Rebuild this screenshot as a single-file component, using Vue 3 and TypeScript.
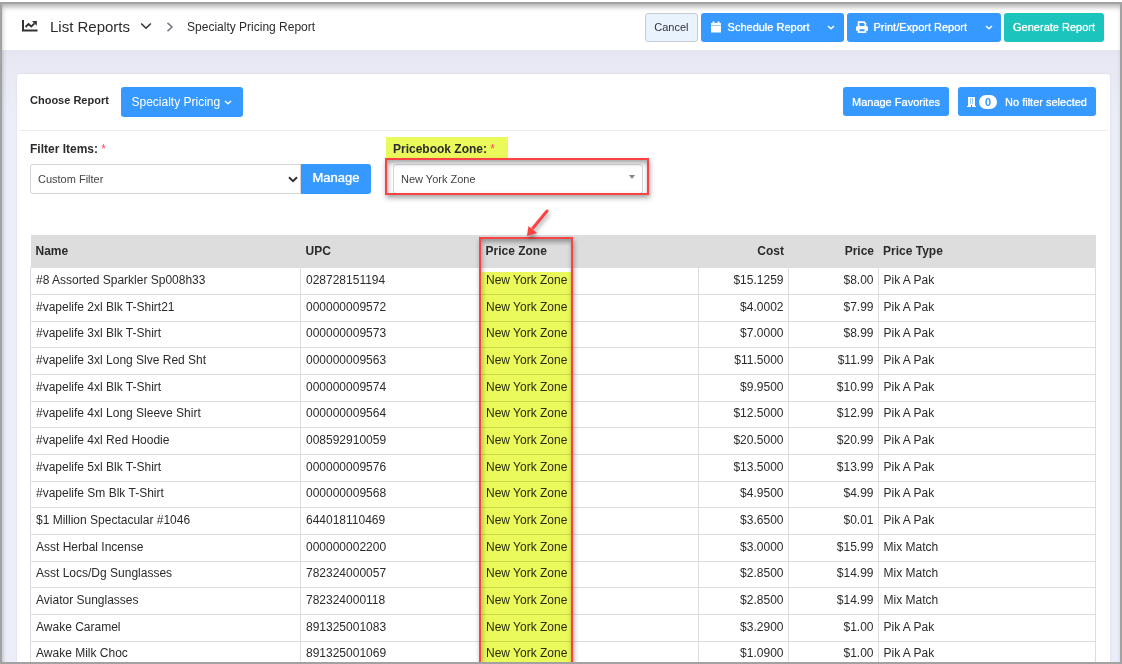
<script setup lang="ts">
import { ref } from 'vue'

interface PriceRow {
  name: string
  upc: string
  cost: string
  price: string
  type: string
}

const filter = ref('Custom Filter')
const zone = ref('New York Zone')

const make = (name: string, upc: string, cost: string, price: string, type = 'Pik A Pak'): PriceRow => ({
  name, upc, cost, price, type,
})

const rows: PriceRow[] = [
  make('#8 Assorted Sparkler Sp008h33', '028728151194', '$15.1259', '$8.00'),
  make('#vapelife 2xl Blk T-Shirt21', '000000009572', '$4.0002', '$7.99'),
  make('#vapelife 3xl Blk T-Shirt', '000000009573', '$7.0000', '$8.99'),
  make('#vapelife 3xl Long Slve Red Sht', '000000009563', '$11.5000', '$11.99'),
  make('#vapelife 4xl Blk T-Shirt', '000000009574', '$9.9500', '$10.99'),
  make('#vapelife 4xl Long Sleeve Shirt', '000000009564', '$12.5000', '$12.99'),
  make('#vapelife 4xl Red Hoodie', '008592910059', '$20.5000', '$20.99'),
  make('#vapelife 5xl Blk T-Shirt', '000000009576', '$13.5000', '$13.99'),
  make('#vapelife Sm Blk T-Shirt', '000000009568', '$4.9500', '$4.99'),
  make('$1 Million Spectacular #1046', '644018110469', '$3.6500', '$0.01'),
  make('Asst Herbal Incense', '000000002200', '$3.0000', '$15.99', 'Mix Match'),
  make('Asst Locs/Dg Sunglasses', '782324000057', '$2.8500', '$14.99', 'Mix Match'),
  make('Aviator Sunglasses', '782324000118', '$2.8500', '$14.99', 'Mix Match'),
  make('Awake Caramel', '891325001083', '$3.2900', '$1.00'),
  make('Awake Milk Choc', '891325001069', '$1.0900', '$1.00'),
]
</script>

<template>
  <div class="frame">
    <header class="topbar">
      <svg class="chart-icon" viewBox="0 0 16 12" aria-hidden="true">
        <path d="M1 0V10.5H15.5" fill="none" stroke="#333" stroke-width="2" />
        <path d="M3.5 7L6.5 4L9.3 6.5L12.5 3.3" fill="none" stroke="#333" stroke-width="1.8" />
        <path d="M10 1H14.8V5.8Z" fill="#333" />
      </svg>
      <button class="crumb-menu" type="button">
        List Reports
        <svg class="chev" viewBox="0 0 12 8" aria-hidden="true"><path d="M1.2 1.5L6 6.2L10.8 1.5" /></svg>
      </button>
      <svg class="sep" viewBox="0 0 8 10" aria-hidden="true"><path d="M1.5 0.8L6 5L1.5 9.2" /></svg>
      <span class="crumb">Specialty Pricing Report</span>
      <div class="actions">
        <button class="btn cancel" type="button">Cancel</button>
        <div class="split">
          <button class="btn blue main" type="button">
            <svg class="cal" viewBox="0 0 11 12" aria-hidden="true">
              <path d="M2 0.5H4V2H7V0.5H9V2H10Q10.5 2 10.5 2.7V4H0.5V2.7Q0.5 2 1 2H2ZM0.5 4.5H10.5V11Q10.5 11.6 10 11.6H1Q0.5 11.6 0.5 11Z" fill="#fff" />
            </svg>
            Schedule Report
          </button>
          <button class="btn blue drop" type="button" aria-label="Schedule options">
            <svg viewBox="0 0 8 5" aria-hidden="true"><path d="M1 1L4 3.7L7 1" /></svg>
          </button>
        </div>
        <div class="split">
          <button class="btn blue main" type="button">
            <svg class="cal" viewBox="0 0 12 12" aria-hidden="true">
              <path d="M2.6 5.5V1.2H8L9.4 2.6V5.5" fill="none" stroke="#fff" stroke-width="1.7" />
              <path d="M1.5 5H10.5Q12 5 12 6.5V9.8H10V8.2H2V9.8H0V6.5Q0 5 1.5 5Z" fill="#fff" />
              <path d="M2.6 8V11.1H9.4V8" fill="none" stroke="#fff" stroke-width="1.7" />
            </svg>
            Print/Export Report
          </button>
          <button class="btn blue drop" type="button" aria-label="Export options">
            <svg viewBox="0 0 8 5" aria-hidden="true"><path d="M1 1L4 3.7L7 1" /></svg>
          </button>
        </div>
        <button class="btn teal" type="button">Generate Report</button>
      </div>
    </header>

    <main class="page">
      <section class="card">
        <div class="toolbar">
          <span class="choose">Choose Report</span>
          <button class="btn blue report" type="button">
            Specialty Pricing
            <svg viewBox="0 0 8 5" aria-hidden="true"><path d="M1 1L4 3.7L7 1" /></svg>
          </button>
          <button class="btn blue favorites" type="button">Manage Favorites</button>
          <button class="btn blue selected" type="button">
            <svg class="building" viewBox="0 0 9 10" aria-hidden="true">
              <path d="M1 0H8V9H9V10H0V9H1Z" fill="#fff" />
              <path d="M3.5 1.5V6.5M5.5 1.5V6.5" stroke="#3699ff" stroke-width="1" stroke-dasharray="1 1" />
              <path d="M4 8H5V10H4Z" fill="#3699ff" />
            </svg>
            <span class="count">0</span>
            No filter selected
          </button>
        </div>

        <div class="filters">
          <div class="field">
            <label for="filter">Filter Items: <b class="req">*</b></label>
            <div class="group">
              <div class="picker">
                <select id="filter" v-model="filter"><option>Custom Filter</option></select>
                <svg class="arrow" viewBox="0 0 10 7" aria-hidden="true">
                  <path d="M1 1.3L5 5.2L9 1.3" fill="none" stroke="#333" stroke-width="2" />
                </svg>
              </div>
              <button class="btn blue manage" type="button">Manage</button>
            </div>
          </div>
          <div class="field zone">
            <label class="marked" for="zone">Pricebook Zone: <b class="req">*</b></label>
            <div class="picker zone-picker">
              <select id="zone" v-model="zone"><option>New York Zone</option></select>
              <svg class="caret" viewBox="0 0 6 4" aria-hidden="true"><path d="M0 0H6L3 4Z" fill="#888" /></svg>
              <div class="callout"></div>
            </div>
          </div>
        </div>

        <div class="grid">
          <table>
            <colgroup>
              <col class="c-name"><col class="c-upc"><col><col class="c-num"><col class="c-num"><col>
            </colgroup>
            <thead>
              <tr>
                <th>Name</th><th>UPC</th><th>Price Zone</th><th class="num">Cost</th><th class="num">Price</th><th>Price Type</th>
              </tr>
            </thead>
            <tbody>
              <tr v-for="row in rows" :key="row.upc">
                <td>{{ row.name }}</td>
                <td>{{ row.upc }}</td>
                <td>New York Zone</td>
                <td class="num">{{ row.cost }}</td>
                <td class="num">{{ row.price }}</td>
                <td>{{ row.type }}</td>
              </tr>
            </tbody>
          </table>
          <div class="highlight"></div>
          <div class="column-box"></div>
          <svg class="pointer" viewBox="0 0 26 32" aria-hidden="true">
            <path d="M22 3L8 20" stroke="#fb4343" stroke-width="3" stroke-linecap="round" />
            <path d="M2 28L3.5 18L12 25Z" fill="#fb4343" />
          </svg>
        </div>
      </section>
    </main>
  </div>
</template>

<style>
body {
  margin: 0;
  background: #fff;
}
</style>

<style scoped>
* {
  box-sizing: border-box;
}
.frame {
  position: relative;
  display: flex;
  flex-direction: column;
  height: 100vh;
  overflow: hidden;
  border-top: 2px solid #fff;
  background: #ebeef8;
  font-family: "Liberation Sans", Arial, sans-serif;
  font-size: 12px;
  color: #2b2b2b;
}
.frame::after {
  content: "";
  position: absolute;
  inset: 0;
  border: 2px solid #a2a2a2;
  box-shadow: inset 1px 4px 5px -1px rgba(0, 0, 0, 0.3);
  pointer-events: none;
}
.topbar {
  display: flex;
  flex: none;
  align-items: center;
  height: 48px;
  padding: 2px 18px 0 22px;
  background: #fff;
}
svg {
  display: block;
  flex: none;
}
.chart-icon {
  width: 16px;
  height: 12px;
  margin: 0 12px 3px 0;
}
button {
  font: inherit;
  cursor: pointer;
}
.crumb-menu {
  display: flex;
  align-items: center;
  gap: 10px;
  padding: 0 0 2px;
  border: 0;
  background: none;
  font-size: 15px;
  color: #2b2b2b;
}
.chev {
  width: 12px;
  height: 8px;
  fill: none;
  stroke: #333;
  stroke-width: 1.6;
}
.sep {
  width: 8px;
  height: 10px;
  margin: 0 13px 0 14px;
  fill: none;
  stroke: #7b7b88;
  stroke-width: 1.6;
}
.actions {
  display: flex;
  gap: 3px;
  margin-left: auto;
}
.btn {
  display: flex;
  align-items: center;
  justify-content: center;
  height: 29px;
  padding: 0 9px;
  border: 0;
  border-radius: 3px;
  font-size: 11px;
  color: #fff;
  white-space: nowrap;
}
.btn svg {
  fill: none;
  stroke: #fff;
  stroke-width: 1.5;
  width: 8px;
  height: 5px;
}
.blue {
  background: #3699ff;
  text-shadow: 0 0 1px #fff;
}
.teal {
  background: #1bc5bd;
  text-shadow: 0 0 1px #fff;
}
.cancel {
  border: 1px solid #c5cdd4;
  background: #e9f3fd;
  color: #333;
  padding: 0 8px;
}
.split {
  display: flex;
}
.main {
  padding-right: 9px;
  border-radius: 3px 0 0 3px;
}
.btn .cal {
  width: 12px;
  height: 12px;
  margin-right: 6px;
  stroke: none;
}
.drop {
  width: 25px;
  padding: 0;
  border-radius: 0 3px 3px 0;
}
.page {
  flex: 1;
  padding: 24px 12px 0 17px;
  background: linear-gradient(#e5e6f1, #ebeef8 60px);
}
.card {
  background: #fff;
  border-radius: 3px;
  box-shadow: 0 0 2px rgba(80, 80, 120, 0.15);
}
.toolbar {
  display: flex;
  align-items: flex-start;
  height: 57px;
  margin: 0 2px;
  padding: 13px 12px 0 11px;
  border-bottom: 1px solid #ececec;
}
.choose {
  margin-right: 12px;
  font-size: 11px;
  font-weight: bold;
  line-height: 27px;
}
.report {
  width: 122px;
  height: 30px;
  gap: 4px;
  font-size: 12px;
  text-shadow: none;
}
.favorites {
  width: 106px;
  margin-left: auto;
}
.selected {
  width: 138px;
  margin-left: 9px;
}
.btn .building {
  width: 9px;
  height: 10px;
  margin-right: 3px;
  stroke: none;
}
.count {
  width: 18px;
  margin-right: 8px;
  border-radius: 7px;
  background: #fff;
  color: #3699ff;
  font-weight: bold;
  line-height: 14px;
  text-shadow: none;
}
.filters {
  display: flex;
  align-items: flex-start;
  gap: 15px;
  padding: 6px 13px 0;
}
.field label {
  display: block;
  height: 27px;
  font-weight: bold;
  line-height: 24px;
}
.field .marked {
  width: 122px;
  height: 23px;
  margin-bottom: 4px;
  padding-left: 7px;
  background: #ebfa5b;
}
.req {
  color: #f64e60;
  font-weight: normal;
}
.group {
  display: flex;
}
.picker {
  position: relative;
  width: 271px;
}
.picker select {
  display: block;
  width: 100%;
  height: 30px;
  padding: 0 7px;
  border: 1px solid #d5d5d5;
  border-radius: 3px 0 0 3px;
  appearance: none;
  background: #fff;
  font: inherit;
  font-size: 11px;
  color: #444;
}
.arrow {
  position: absolute;
  right: 3px;
  top: 12px;
  width: 10px;
  height: 7px;
}
.manage {
  width: 70px;
  height: 30px;
  padding-bottom: 3px;
  border-radius: 0 3px 3px 0;
  font-size: 13px;
}
.zone .zone-picker {
  width: 250px;
  margin-left: 7px;
}
.zone-picker select {
  border-radius: 3px;
}
.caret {
  position: absolute;
  right: 8px;
  top: 11px;
  width: 6px;
  height: 4px;
}
.callout {
  position: absolute;
  inset: -6px -6px -1px -8px;
  border: 2px solid #fb4343;
  box-shadow: 1px 3px 5px rgba(0, 0, 0, 0.35), inset 1px 3px 5px rgba(0, 0, 0, 0.35);
  pointer-events: none;
}
.grid {
  position: relative;
  margin: 41px 14px 0 13px;
}
table {
  width: 100%;
  border-collapse: collapse;
  table-layout: fixed;
}
.c-name {
  width: 270px;
}
.c-upc {
  width: 180px;
}
.c-num {
  width: 90px;
}
th {
  height: 32px;
  padding: 0 5px;
  background: #ddd;
  text-align: left;
}
tbody tr {
  height: 27px;
}
tbody tr:nth-child(3n) {
  height: 26px;
}
td {
  padding: 0 5px 2px;
  border: 1px solid #ddd;
  line-height: 16px;
  white-space: nowrap;
}
.num {
  padding-right: 4px;
  text-align: right;
}
.highlight {
  position: absolute;
  left: 452px;
  top: 37px;
  bottom: 0;
  width: 89px;
  background: #ebfa5b;
  mix-blend-mode: multiply;
}
.column-box {
  position: absolute;
  left: 449px;
  top: 2px;
  bottom: -8px;
  width: 94px;
  border: 2px solid #fb4343;
  box-shadow: 1px 3px 5px rgba(0, 0, 0, 0.35), inset 1px 3px 5px rgba(0, 0, 0, 0.35);
}
.pointer {
  position: absolute;
  left: 495px;
  top: -27px;
  width: 26px;
  height: 32px;
  fill: none;
  filter: drop-shadow(1px 3px 2px rgba(0, 0, 0, 0.35));
}
</style>
